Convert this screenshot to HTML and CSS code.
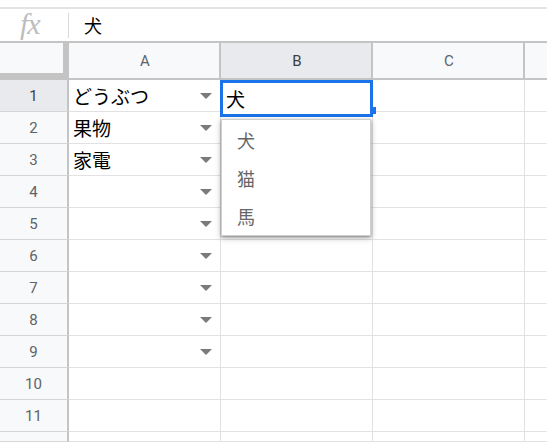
FILE: index.html
```html
<!DOCTYPE html>
<html lang="ja">
<head>
<meta charset="utf-8">
<title>Sheet</title>
<link rel="stylesheet" href="styles.css">
</head>
<body>
<div class="topgap"></div>
<div class="fbar">
  <span class="fx">fx</span>
  <span class="sep"></span>
  <span class="fval">犬</span>
</div>
<div class="sheet">
  <div class="corner"></div>
  <div class="colhead">A</div>
  <div class="colhead sel">B</div>
  <div class="colhead">C</div>
  <div class="colhead"></div>

  <div class="rowhead sel">1</div>
  <div class="cell dd"><span class="val">どうぶつ</span><span class="arrow"></span></div>
  <div class="cell"></div><div class="cell"></div><div class="cell"></div>

  <div class="rowhead">2</div>
  <div class="cell dd"><span class="val">果物</span><span class="arrow"></span></div>
  <div class="cell"></div><div class="cell"></div><div class="cell"></div>

  <div class="rowhead">3</div>
  <div class="cell dd"><span class="val">家電</span><span class="arrow"></span></div>
  <div class="cell"></div><div class="cell"></div><div class="cell"></div>

  <div class="rowhead">4</div>
  <div class="cell dd"><span class="val"></span><span class="arrow"></span></div>
  <div class="cell"></div><div class="cell"></div><div class="cell"></div>

  <div class="rowhead">5</div>
  <div class="cell dd"><span class="val"></span><span class="arrow"></span></div>
  <div class="cell"></div><div class="cell"></div><div class="cell"></div>

  <div class="rowhead">6</div>
  <div class="cell dd"><span class="val"></span><span class="arrow"></span></div>
  <div class="cell"></div><div class="cell"></div><div class="cell"></div>

  <div class="rowhead">7</div>
  <div class="cell dd"><span class="val"></span><span class="arrow"></span></div>
  <div class="cell"></div><div class="cell"></div><div class="cell"></div>

  <div class="rowhead">8</div>
  <div class="cell dd"><span class="val"></span><span class="arrow"></span></div>
  <div class="cell"></div><div class="cell"></div><div class="cell"></div>

  <div class="rowhead">9</div>
  <div class="cell dd"><span class="val"></span><span class="arrow"></span></div>
  <div class="cell"></div><div class="cell"></div><div class="cell"></div>

  <div class="rowhead">10</div>
  <div class="cell"></div><div class="cell"></div><div class="cell"></div><div class="cell"></div>

  <div class="rowhead">11</div>
  <div class="cell"></div><div class="cell"></div><div class="cell"></div><div class="cell"></div>

  <div class="rowhead"></div>
  <div class="cell"></div><div class="cell"></div><div class="cell"></div><div class="cell"></div>

  <div class="editor"><span class="edval">犬</span><span class="handle"></span></div>
  <div class="menu">
    <div class="item">犬</div>
    <div class="item">猫</div>
    <div class="item">馬</div>
  </div>
</div>
</body>
</html>
```
FILE: styles.css
```css
html, body {
  margin: 0;
  padding: 0;
  background: #ffffff;
  overflow: hidden;
  width: 547px;
  height: 442px;
}
body {
  font-family: "Noto Sans CJK JP", "Liberation Sans", sans-serif;
}
.topgap {
  height: 7px;
}
.fbar {
  box-sizing: border-box;
  height: 36px;
  border-top: 2px solid #e3e3e3;
  border-bottom: 2px solid #c4c4c4;
  display: flex;
  align-items: center;
}
.fx {
  font-family: "Liberation Serif", serif;
  font-style: italic;
  font-size: 30px;
  color: #bdbdbd;
  width: 47px;
  padding-left: 20px;
  box-sizing: border-box;
  line-height: 1;
  letter-spacing: -1px;
  margin-top: -2px;
}
.sep {
  width: 1px;
  height: 25px;
  background: #dadada;
  margin-left: 21px;
}
.fval {
  font-size: 18px;
  color: #000;
  margin-left: 15px;
  line-height: 1;
}
.sheet {
  position: relative;
  width: 547px;
  overflow: hidden;
  display: grid;
  grid-template-columns: 69px 152px 152px 152px 40px;
  grid-template-rows: 37px repeat(11, 32px) 10px;
}
.corner {
  box-sizing: border-box;
  background: #f8f9fa;
  border-right: 6px solid #c4c4c4;
  border-bottom: 7px solid #c4c4c4;
}
.colhead {
  box-sizing: border-box;
  background: #f8f9fa;
  border-right: 2px solid #c4c4c4;
  border-bottom: 2px solid #c4c4c4;
  font-family: Roboto, "Liberation Sans", sans-serif;
  font-size: 15px;
  color: #5f6368;
  display: flex;
  align-items: center;
  justify-content: center;
  padding-left: 2px;
}
.colhead.sel {
  background: #e8eaed;
  color: #3c4043;
}
.rowhead {
  box-sizing: border-box;
  background: #f8f9fa;
  border-right: 2px solid #c4c4c4;
  border-bottom: 1px solid #d6d6d6;
  font-family: Roboto, "Liberation Sans", sans-serif;
  font-size: 15px;
  color: #5f6368;
  display: flex;
  align-items: center;
  justify-content: center;
}
.rowhead.sel {
  background: #e8eaed;
  color: #3c4043;
}
.cell {
  box-sizing: border-box;
  border-right: 1px solid #e2e2e3;
  border-bottom: 1px solid #e2e2e3;
  display: flex;
  align-items: center;
  justify-content: space-between;
}
.val {
  font-size: 19px;
  color: #000;
  padding-left: 4px;
  line-height: 1;
}
.arrow {
  width: 0;
  height: 0;
  border-left: 6px solid transparent;
  border-right: 6px solid transparent;
  border-top: 6px solid #7a7a7a;
  margin-right: 8px;
}
.editor {
  position: absolute;
  left: 220px;
  top: 0;
  margin-top: 37px;
  width: 153px;
  height: 37px;
  box-sizing: border-box;
  border: 3px solid #1a73e8;
  background: #fff;
  display: flex;
  align-items: center;
}
.edval {
  font-size: 19px;
  color: #000;
  padding-left: 3px;
  line-height: 1;
}
.handle {
  position: absolute;
  right: -6px;
  bottom: 0px;
  width: 6px;
  height: 7px;
  background: #1a73e8;
}
.menu {
  position: absolute;
  left: 221px;
  top: 76px;
  width: 150px;
  height: 117px;
  background: #fff;
  box-shadow: 0 1px 2px rgba(0,0,0,0.3), 0 2px 6px rgba(0,0,0,0.3);
  border: 1px solid #cfcfcf;
  box-sizing: border-box;
  padding-top: 1px;
}
.item {
  height: 38px;
  display: flex;
  align-items: center;
  padding-left: 15px;
  font-size: 18px;
  color: #666;
}
```
